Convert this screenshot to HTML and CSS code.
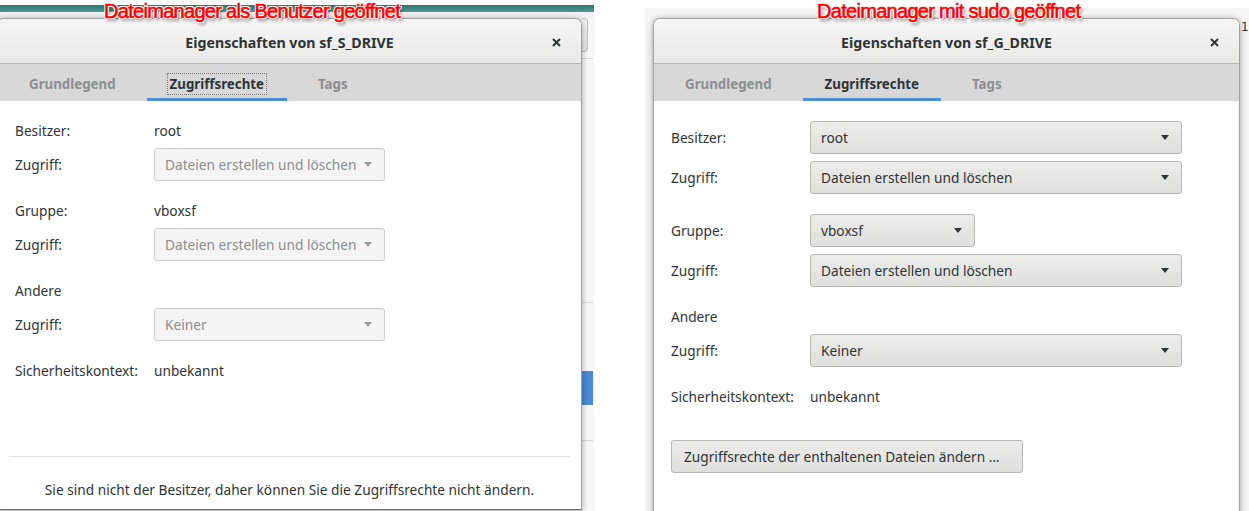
FILE: index.html
```html
<!DOCTYPE html>
<html lang="de">
<head>
  <meta charset="UTF-8">
  <title>Eigenschaften – Zugriffsrechte</title>
  <link rel="stylesheet" href="styles.css">
</head>
<body>
<div class="canvas">

  <!-- left screenshot: opened as normal user -->
  <div class="shot shot-left">
    <div class="dialog dialog-left">
      <div class="titlebar">
        <span class="title">Eigenschaften von sf_S_DRIVE</span>
        <span class="close">
          <svg width="9" height="9" viewBox="0 0 9 9"><path d="M1 1 L8 8 M8 1 L1 8" stroke="#2e3436" stroke-width="2"/></svg>
        </span>
      </div>
      <div class="tabs">
        <div class="tab">Grundlegend</div>
        <div class="tab active"><span class="focus">Zugriffsrechte</span></div>
        <div class="tab">Tags</div>
      </div>
      <div class="props">
        <div class="section">
          <span class="label">Besitzer:</span>
          <span class="value">root</span>
          <span class="label">Zugriff:</span>
          <div class="combo off combo-s"><span>Dateien erstellen und löschen</span><i class="arrow"></i></div>
        </div>
        <div class="section">
          <span class="label">Gruppe:</span>
          <span class="value">vboxsf</span>
          <span class="label">Zugriff:</span>
          <div class="combo off combo-s"><span>Dateien erstellen und löschen</span><i class="arrow"></i></div>
        </div>
        <div class="section">
          <span class="label">Andere</span>
          <span></span>
          <span class="label">Zugriff:</span>
          <div class="combo off combo-s"><span>Keiner</span><i class="arrow"></i></div>
        </div>
        <div class="section">
          <span class="label">Sicherheitskontext:</span>
          <span class="value">unbekannt</span>
        </div>
      </div>
      <div class="footer">Sie sind nicht der Besitzer, daher können Sie die Zugriffsrechte nicht ändern.</div>
    </div>
    <div class="strip">
      <div class="bg-btn"></div>
      <div class="bg-line line-1"></div>
      <div class="bg-line line-2"></div>
      <div class="bg-sel"></div>
      <div class="bg-line line-3"></div>
    </div>
  </div>

  <!-- right screenshot: opened with sudo -->
  <div class="shot shot-right">
    <div class="dialog dialog-right">
      <div class="titlebar">
        <span class="title">Eigenschaften von sf_G_DRIVE</span>
        <span class="close">
          <svg width="9" height="9" viewBox="0 0 9 9"><path d="M1 1 L8 8 M8 1 L1 8" stroke="#2e3436" stroke-width="2"/></svg>
        </span>
      </div>
      <div class="tabs">
        <div class="tab">Grundlegend</div>
        <div class="tab active">Zugriffsrechte</div>
        <div class="tab">Tags</div>
      </div>
      <div class="props">
        <div class="section">
          <span class="label">Besitzer:</span>
          <div class="combo combo-l"><span>root</span><i class="arrow"></i></div>
          <span class="label">Zugriff:</span>
          <div class="combo combo-l"><span>Dateien erstellen und löschen</span><i class="arrow"></i></div>
        </div>
        <div class="section">
          <span class="label">Gruppe:</span>
          <div class="combo combo-m"><span>vboxsf</span><i class="arrow"></i></div>
          <span class="label">Zugriff:</span>
          <div class="combo combo-l"><span>Dateien erstellen und löschen</span><i class="arrow"></i></div>
        </div>
        <div class="section">
          <span class="label">Andere</span>
          <span></span>
          <span class="label">Zugriff:</span>
          <div class="combo combo-l"><span>Keiner</span><i class="arrow"></i></div>
        </div>
        <div class="section">
          <span class="label">Sicherheitskontext:</span>
          <span class="value">unbekannt</span>
        </div>
        <div class="btn">Zugriffsrechte der enthaltenen Dateien ändern …</div>
      </div>
    </div>
    <div class="edge">1</div>
  </div>

  <div class="note note-left">Dateimanager als Benutzer geöffnet</div>
  <div class="note note-right">Dateimanager mit sudo geöffnet</div>
</div>
</body>
</html>
```

FILE: styles.css
```css
* {
  margin: 0;
  padding: 0;
  box-sizing: border-box;
}

body {
  width: 1249px;
  height: 511px;
  overflow: hidden;
  background: #fff;
  font-family: "Noto Sans", sans-serif;
  font-size: 13.7px;
  color: #2e3436;
}

.canvas {
  position: relative;
  display: flex;
  height: 511px;
}

.shot {
  height: 511px;
  overflow: hidden;
  display: flex;
  align-items: flex-start;
}

.shot-left {
  width: 594px;
  padding-top: 18px;
  background: linear-gradient(to bottom, #fff 0, #fff 5px, #2c7570 5px, #4f9a94 12px, #f2f2f2 12px);
}

.shot-right {
  width: 604px;
  margin-left: 51px;
  padding: 18px 0 0 8px;
  background: linear-gradient(to bottom, #fff 0, #fff 8px, #f5f5f5 8px);
}

/* dialog window */

.dialog {
  position: relative;
  z-index: 1;
  flex-shrink: 0;
  display: flex;
  flex-direction: column;
  background: #fff;
  border: 1px solid #a2a2a2;
  border-bottom-color: #6a6a6a;
  border-radius: 7px 7px 0 0;
  box-shadow: 0 1px 6px rgba(0, 0, 0, .35);
}

.dialog-left {
  width: 585px;
  height: 492px;
  margin-left: -3px;
}

.dialog-right {
  width: 587px;
  height: 520px;
}

.titlebar {
  height: 45px;
  display: grid;
  grid-template-columns: 1fr auto 1fr;
  align-items: center;
  padding-top: 3px;
  border-bottom: 1px solid #b9b9b6;
  border-radius: 6px 6px 0 0;
  background: linear-gradient(#f5f5f5, #e9e9e8);
}

.title {
  grid-column: 2;
  font-weight: bold;
  font-size: 14.2px;
}

.close {
  grid-column: 3;
  justify-self: end;
  margin-right: 20px;
  display: flex;
}

.tabs {
  display: flex;
  gap: 9px;
  height: 37px;
  padding-left: 9px;
  background: #d8d8d8;
}

.tab {
  height: 37px;
  padding: 6px 22px 0;
  border-bottom: 3px solid transparent;
  line-height: 28px;
  font-weight: bold;
  font-size: 13.3px;
  color: #8c8f90;
}

.tab.active {
  color: #2e3436;
  border-bottom-color: #4a90d9;
}

.focus {
  outline: 1px dotted #7a7a7a;
  outline-offset: 1px;
  padding: 0 1px;
}

/* permissions form */

.props {
  flex: 1;
  display: flex;
  flex-direction: column;
  align-items: flex-start;
  gap: 20px;
  padding: 20px 17px 0;
}

.section {
  display: grid;
  grid-template-columns: 139px auto;
  row-gap: 7px;
  align-items: center;
  justify-items: start;
}

.label,
.value {
  line-height: 20px;
  white-space: nowrap;
}

.combo {
  height: 33px;
  display: flex;
  align-items: center;
  justify-content: space-between;
  padding: 0 12px 0 10px;
  border: 1px solid #b6b6b3;
  border-radius: 3px;
  background: linear-gradient(#ececeb, #dfdfde);
  white-space: nowrap;
}

.combo.off {
  background: #f4f4f4;
  border-color: #cdcdcb;
  color: #8b8e8f;
}

.combo-s {
  width: 231px;
}

.combo-m {
  width: 165px;
}

.combo-l {
  width: 372px;
}

.arrow {
  width: 0;
  height: 0;
  margin-left: 8px;
  border-left: 4px solid transparent;
  border-right: 4px solid transparent;
  border-top: 5px solid #2e3436;
}

.combo.off .arrow {
  border-top-color: #9a9c9d;
}

.btn {
  margin-top: 13px;
  height: 33px;
  padding: 0 22px 0 12px;
  line-height: 31px;
  border: 1px solid #b6b6b3;
  border-radius: 3px;
  background: linear-gradient(#ececeb, #dfdfde);
  white-space: nowrap;
}

.footer {
  margin: 0 11px;
  padding: 23px 0 9px;
  border-top: 1px solid #e2e2e2;
  text-align: center;
  line-height: 20px;
}

/* bits of the window behind the left dialog */

.strip {
  width: 11px;
  height: 493px;
  flex-shrink: 0;
  display: flex;
  flex-direction: column;
  background: #f7f7f7;
}

.bg-btn {
  width: 6px;
  height: 34px;
  border: 1px solid #bdbdbd;
  border-left: none;
  border-radius: 0 4px 4px 0;
  background: linear-gradient(#f4f4f4, #e6e6e6);
}

.bg-line {
  height: 1px;
  background: #d8d8d8;
}

.line-1 {
  margin-top: 6px;
}

.line-2 {
  margin-top: 243px;
}

.line-3 {
  margin-top: 35px;
}

.bg-sel {
  height: 34px;
  margin-top: 68px;
  background: #4a8ad4;
}

.edge {
  width: 9px;
  padding-left: 1px;
  font-family: "DejaVu Sans", sans-serif;
  font-size: 12px;
  line-height: 18px;
  white-space: nowrap;
}

/* red annotations */

.note {
  position: absolute;
  top: 0;
  z-index: 5;
  font-family: "Liberation Sans", Arial, sans-serif;
  font-size: 20px;
  letter-spacing: -0.7px;
  color: #f00;
  -webkit-text-stroke: 0.6px #f00;
  white-space: nowrap;
  text-shadow: -1px 0 #fff, 1px 0 #fff, 0 -1px #fff, 0 1px #fff,
    1px 1px #fff, -1px -1px #fff, 1px -1px #fff, -1px 1px #fff,
    2px 3px 3px rgba(0, 0, 0, .45);
}

.note-left {
  left: 104px;
}

.note-right {
  left: 817px;
}
```
